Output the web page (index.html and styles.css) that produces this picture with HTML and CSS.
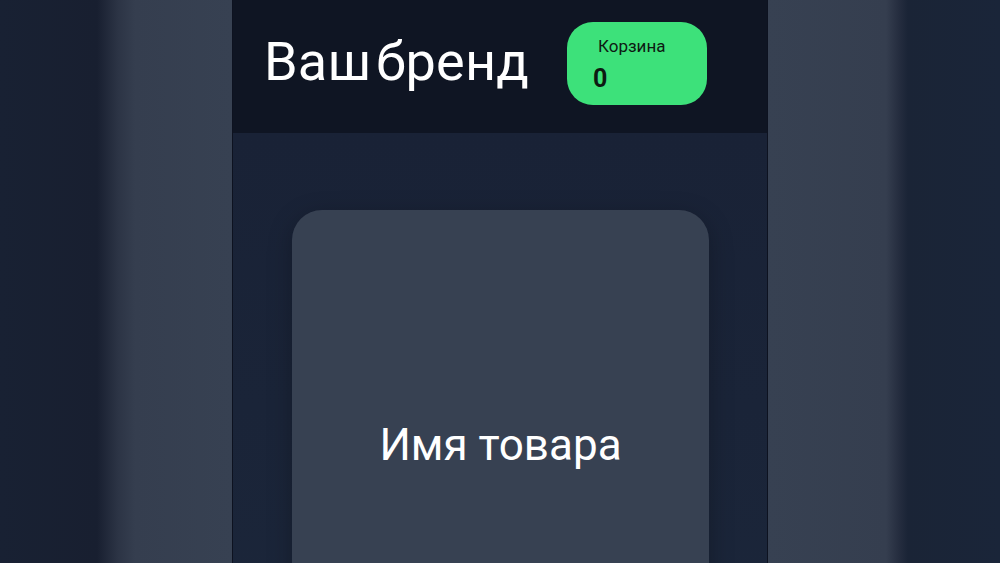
FILE: index.html
```html
<!DOCTYPE html>
<html lang="ru">
  <head>
    <meta charset="UTF-8" />
    <meta name="viewport" content="width=device-width, initial-scale=1.0" />
    <title>Ваш бренд</title>
    <link rel="stylesheet" href="styles.css">
  </head>
  <body>
    <div class="stage">
      <div class="side side-left"></div>

      <div class="phone">
        <header class="top-bar">
          <h1 class="brand">Ваш бренд</h1>
          <button class="cart-btn">
            <span class="cart-label">Корзина</span>
            <span class="cart-count">0</span>
          </button>
        </header>

        <main class="shop">
          <div class="product-card">
            <h2 class="product-name">Имя товара</h2>
          </div>
        </main>
      </div>

      <div class="side side-right"></div>
    </div>
  </body>
</html>
```

FILE: styles.css
```css
html,
body {
  margin: 0;
  height: 100%;
  overflow: hidden;
}
body {
  font-family: Roboto, "Noto Sans", sans-serif;
  background-color: #1a2438;
  color: #fff;
}
.stage {
  display: grid;
  grid-template-columns: 232px 536px 232px;
  height: 563px;
}
.side-left {
  background: linear-gradient(
    to right,
    #182133 0px,
    #181f30 97px,
    #2c3445 118px,
    #353e4f 135px,
    #374152 232px
  );
}
.side-right {
  background: linear-gradient(
    to right,
    #374152 0px,
    #353e4f 118px,
    #262e40 130px,
    #1a2436 140px,
    #1a2539 232px
  );
}
.phone {
  display: flex;
  flex-direction: column;
  border-left: 1px solid #0d1220;
  border-right: 1px solid #0d1220;
  background-color: #1a2438;
  overflow: hidden;
}
.top-bar {
  height: 133px;
  flex-shrink: 0;
  background-color: #0f1523;
  display: flex;
  align-items: flex-start;
  padding: 0 0 0 31px;
  box-sizing: border-box;
}
.brand {
  margin: 35px 0 0;
  font-size: 54px;
  font-weight: 400;
  line-height: 1;
  letter-spacing: 0.2px;
  word-spacing: -9px;
  color: #fff;
}
.cart-btn {
  margin: 22px 0 0 38px;
  width: 140px;
  height: 83px;
  border: none;
  border-radius: 26px;
  background-color: #3de17a;
  display: flex;
  flex-direction: column;
  align-items: flex-start;
  padding: 13px 0 0 26px;
  box-sizing: border-box;
  font-family: Roboto, "Noto Sans", sans-serif;
  color: #0d1a12;
  cursor: pointer;
}
.cart-label {
  font-size: 17px;
  line-height: 22px;
  margin-left: 5px;
}
.cart-count {
  font-size: 25px;
  font-weight: 700;
  line-height: 28px;
  margin-top: 8px;
}
.shop {
  flex: 1;
  padding: 77px 58px 0 59px;
  background: linear-gradient(to bottom, #192236, #1b263a);
}
.product-card {
  height: 470px;
  border-radius: 30px;
  background-color: #374152;
  box-shadow: 0 6px 24px rgba(0, 0, 0, 0.25);
  display: flex;
  align-items: center;
  justify-content: center;
}
.product-name {
  margin: 0;
  font-size: 44px;
  font-weight: 400;
  color: #fff;
}
```
